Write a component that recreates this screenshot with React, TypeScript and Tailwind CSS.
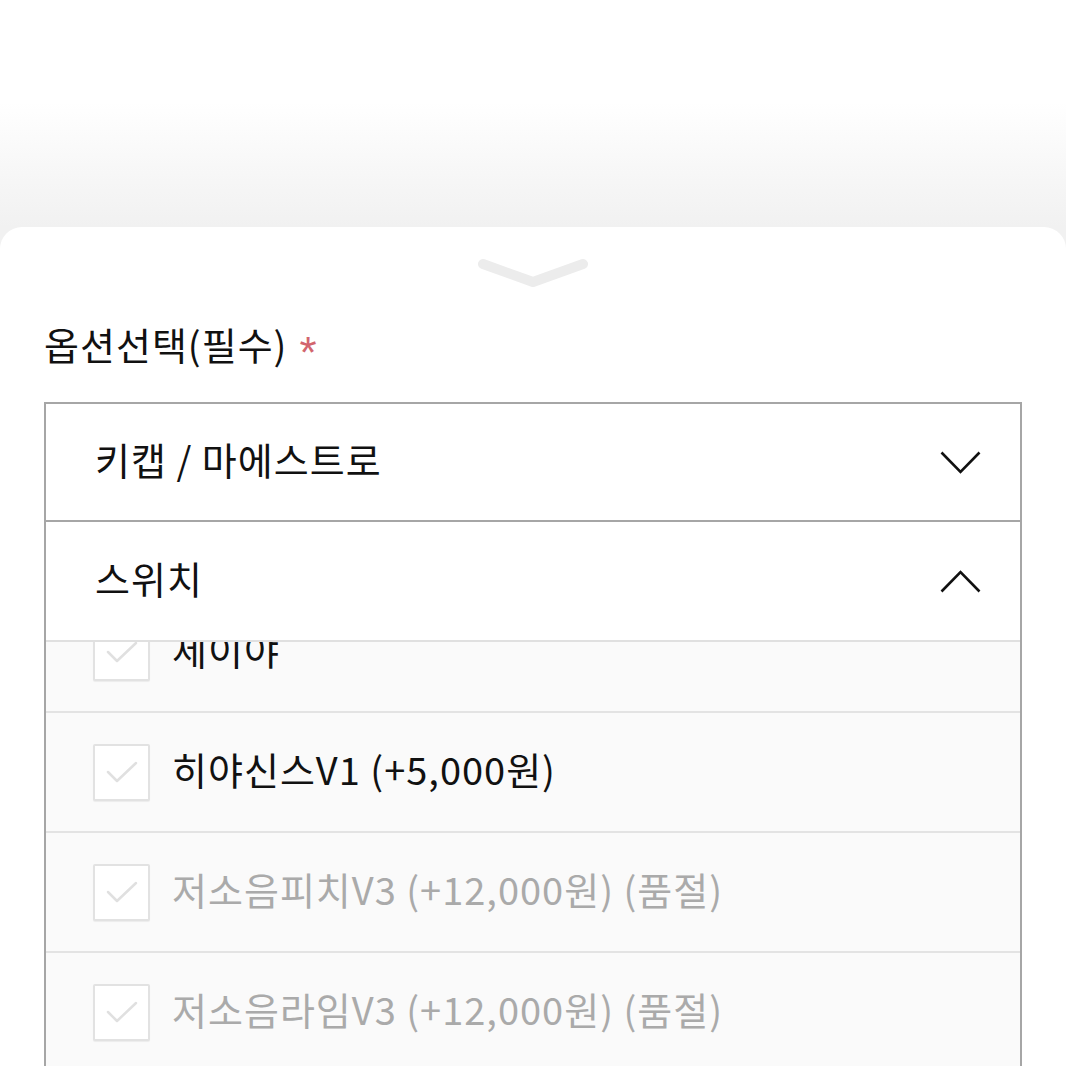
import React from "react";

const font = { fontFamily: '"Noto Sans CJK KR", "Noto Sans", sans-serif' };

interface Option {
  label: string;
  soldOut?: boolean;
}

const options: Option[] = [
  { label: "세이야" },
  { label: "히야신스V1 (+5,000원)" },
  { label: "저소음피치V3 (+12,000원) (품절)", soldOut: true },
  { label: "저소음라임V3 (+12,000원) (품절)", soldOut: true },
];

function Chevron({ up }: { up?: boolean }) {
  return (
    <svg width="41" height="23" viewBox="0 0 41 23" fill="none">
      <polyline
        points={up ? "1.5,21.5 20.5,2 39.5,21.5" : "1.5,1.5 20.5,21 39.5,1.5"}
        stroke="#111"
        strokeWidth="2.6"
      />
    </svg>
  );
}

function CheckBox() {
  return (
    <div className="w-[57px] h-[57px] shrink-0 bg-white border-2 border-[#e2e2e2] rounded-[2px] shadow-[0_1px_1px_rgba(0,0,0,0.06)] flex items-center justify-center">
      <svg width="34" height="24" viewBox="0 0 34 24" fill="none">
        <polyline points="3,12 12,21 31,3" stroke="#e0e0e0" strokeWidth="2.5" strokeLinecap="round" strokeLinejoin="round" />
      </svg>
    </div>
  );
}

export default function App() {
  return (
    <div className="h-[1066px] overflow-hidden bg-[#f1f1f1]" style={font}>
      <div className="h-[227px] bg-gradient-to-b from-white via-white via-45% to-[#f1f1f1]" />

      <div className="bg-white rounded-t-[22px] h-[839px]">
        <div className="flex justify-center pt-[29px]">
          <svg width="112" height="34" viewBox="0 0 112 34" fill="none">
            <polyline points="6,8 56,26 106,8" stroke="#ececec" strokeWidth="10" strokeLinecap="round" strokeLinejoin="round" />
          </svg>
        </div>

        <div className="px-[44px]">
          <div className="flex items-center h-[48px] mt-[30px] text-[38px] tracking-[1px] text-[#111] leading-[48px]">
            <span>옵션선택(필수)</span>
            <span className="ml-[12px] mt-[18px] text-[44px] leading-none text-[#d2656e]" style={{ fontFamily: '"Liberation Sans", sans-serif' }}>*</span>
          </div>

          <div className="mt-[34px] border-2 border-b-0 border-[#a6a6a6] text-[38px] tracking-[1px]">
            <div className="h-[118px] flex items-center justify-between pl-[49px] pr-[39px] border-b-2 border-[#a6a6a6]">
              <span className="text-[#111] mb-[8px]">키캡 / 마에스트로</span>
              <Chevron />
            </div>
            <div className="h-[120px] flex items-center justify-between pl-[49px] pr-[39px] border-b-2 border-[#e0e0e0]">
              <span className="text-[#111] mb-[8px]">스위치</span>
              <Chevron up />
            </div>

            <div className="h-[430px] overflow-hidden bg-[#fafafa]">
              <div className="-mt-[49px]">
                {options.map((o, i) => (
                  <div key={i} className="h-[120px] flex items-center gap-[22px] pl-[47px] border-b-2 border-[#e3e3e3]">
                    <CheckBox />
                    <span className={(o.soldOut ? "text-[#aaaaaa]" : "text-[#111]") + " mb-[8px]"}>{o.label}</span>
                  </div>
                ))}
              </div>
            </div>
          </div>
        </div>
      </div>
    </div>
  );
}
